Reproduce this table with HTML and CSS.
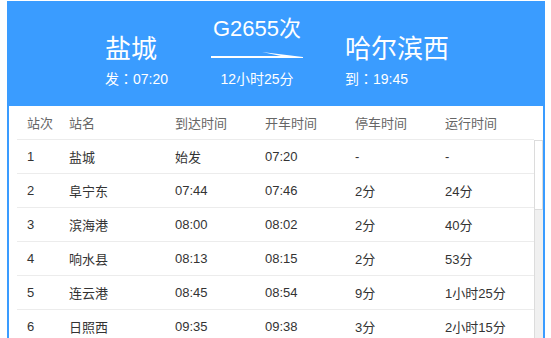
FILE: index.html
```html
<!DOCTYPE html>
<html lang="zh-CN">
<head>
<meta charset="utf-8">
<title>G2655次</title>
<link rel="stylesheet" href="styles.css">
</head>
<body>
<div class="panel">
  <div class="hd">
    <div class="st st-from">
      <div class="st-name">盐城</div>
      <div class="st-time">发<span class="colon" lang="zh-TW">：</span>07:20</div>
    </div>
    <div class="mid">
      <div class="train-no">G2655次</div>
      <svg class="arrow" width="92" height="8" viewBox="0 0 92 8"><polygon points="0,6 70,6 51,2 92,7 92,8 0,8" fill="#fff"/></svg>
      <div class="dur">12小时25分</div>
    </div>
    <div class="st st-to">
      <div class="st-name">哈尔滨西</div>
      <div class="st-time">到<span class="colon" lang="zh-TW">：</span>19:45</div>
    </div>
  </div>
  <div class="content">
    <div class="row row-head">
      <div class="cell">站次</div><div class="cell">站名</div><div class="cell">到达时间</div><div class="cell">开车时间</div><div class="cell">停车时间</div><div class="cell">运行时间</div>
    </div>
    <div class="body">
      <div class="rows">
        <div class="row"><div class="cell">1</div><div class="cell">盐城</div><div class="cell">始发</div><div class="cell">07:20</div><div class="cell">-</div><div class="cell">-</div></div>
        <div class="row"><div class="cell">2</div><div class="cell">阜宁东</div><div class="cell">07:44</div><div class="cell">07:46</div><div class="cell">2分</div><div class="cell">24分</div></div>
        <div class="row"><div class="cell">3</div><div class="cell">滨海港</div><div class="cell">08:00</div><div class="cell">08:02</div><div class="cell">2分</div><div class="cell">40分</div></div>
        <div class="row"><div class="cell">4</div><div class="cell">响水县</div><div class="cell">08:13</div><div class="cell">08:15</div><div class="cell">2分</div><div class="cell">53分</div></div>
        <div class="row"><div class="cell">5</div><div class="cell">连云港</div><div class="cell">08:45</div><div class="cell">08:54</div><div class="cell">9分</div><div class="cell">1小时25分</div></div>
        <div class="row"><div class="cell">6</div><div class="cell">日照西</div><div class="cell">09:35</div><div class="cell">09:38</div><div class="cell">3分</div><div class="cell">2小时15分</div></div>
      </div>
      <div class="scrollbar"><div class="thumb"></div></div>
    </div>
  </div>
</div>
</body>
</html>
```
FILE: styles.css
```css
html, body {
  margin: 0;
  padding: 0;
  background: #fff;
}
body {
  font-family: "Liberation Sans", "Noto Sans CJK SC", sans-serif;
  overflow: hidden;
}
.panel {
  margin: 1px 6px 0 7px;
  width: 538px;
}
.hd {
  background: #3a9cff;
  height: 105px;
  box-sizing: border-box;
  display: flex;
  align-items: flex-end;
  padding: 0 0 17px 98px;
  color: #fff;
}
.st {
  display: flex;
  flex-direction: column;
}
.st-from { width: 106px; }
.st-to { margin-left: 42px; }
.st-name {
  font-size: 26px;
  line-height: 30px;
  margin-bottom: 4px;
}
.st-time, .dur {
  font-size: 14px;
  line-height: 20px;
}
.colon {
  font-family: "Noto Sans CJK TC", "Noto Sans CJK SC", sans-serif;
}
.mid {
  width: 92px;
  display: flex;
  flex-direction: column;
  align-items: center;
}
.train-no {
  font-size: 22px;
  line-height: 26px;
  margin-bottom: 8px;
}
.arrow {
  display: block;
  margin-bottom: 11px;
}
.content {
  background: #fff;
  border-left: 2px solid #3a9cff;
  border-right: 2px solid #3a9cff;
  padding-left: 8px;
  height: 240px;
  overflow: hidden;
}
.row {
  display: grid;
  grid-template-columns: 42px 106px 90px 90px 90px 1fr;
  height: 34px;
  box-sizing: border-box;
  border-bottom: 1px solid #ececec;
  align-items: center;
  font-size: 13px;
  color: #333;
}
.row-head {
  margin-right: 9px;
  color: #666;
}
.cell {
  padding-left: 10px;
  white-space: nowrap;
}
.body {
  display: flex;
}
.rows {
  flex: 1;
}
.scrollbar {
  width: 9px;
  background: #f0f0f0;
  border-left: 1px solid #dcdcdc;
  box-sizing: border-box;
  height: 240px;
}
.thumb {
  height: 70px;
  background: #fff;
  border: 1px solid #dcdcdc;
  border-left: none;
  box-sizing: border-box;
}
```
